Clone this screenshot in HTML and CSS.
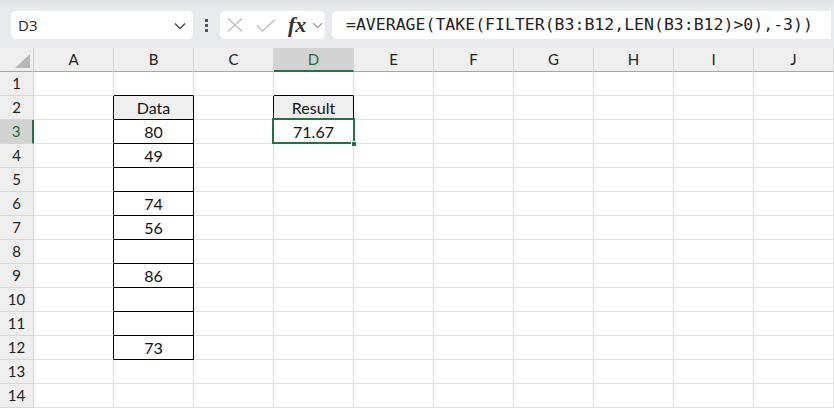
FILE: index.html
```html
<!DOCTYPE html>
<html>
<head>
<meta charset="utf-8">
<link rel="stylesheet" href="styles.css">
</head>
<body>
<div class="toolbar">
  <div class="namebox">
    <span class="nb-text">D3</span>
    <svg class="chev" width="12" height="8" viewBox="0 0 12 8"><path d="M1 1.5 L6 6.5 L11 1.5" fill="none" stroke="#444" stroke-width="1.3"/></svg>
  </div>
  <div class="dots"><span></span><span></span><span></span></div>
  <div class="fxbox">
    <svg class="ico" width="16" height="14" viewBox="0 0 16 14"><path d="M1 0.5 L15 13.5 M15 0.5 L1 13.5" stroke="#bdbdbd" stroke-width="1.3" fill="none"/></svg>
    <svg class="ico2" width="20" height="13" viewBox="0 0 20 13"><path d="M1 6.5 L6.5 12 L19 0.5" stroke="#bdbdbd" stroke-width="1.3" fill="none"/></svg>
    <span class="fx">fx</span>
    <svg class="chev2" width="11" height="7" viewBox="0 0 11 7"><path d="M1 1.2 L5.5 5.7 L10 1.2" fill="none" stroke="#9a9a9a" stroke-width="1.2"/></svg>
  </div>
  <div class="formula">=AVERAGE(TAKE(FILTER(B3:B12,LEN(B3:B12)&gt;0),-3))</div>
</div>
<div class="sheet">
  <div class="corner"><span class="tri"></span></div>
  <div class="ch">A</div><div class="ch">B</div><div class="ch">C</div><div class="ch sel">D</div><div class="ch">E</div><div class="ch">F</div><div class="ch">G</div><div class="ch">H</div><div class="ch">I</div><div class="ch">J</div>

  <div class="rh">1</div>
  <div class="c"></div><div class="c bb"></div><div class="c"></div><div class="c bb"></div><div class="c"></div><div class="c"></div><div class="c"></div><div class="c"></div><div class="c"></div><div class="c"></div>

  <div class="rh">2</div>
  <div class="c br"></div><div class="c bb br hd">Data</div><div class="c br"></div><div class="c bb br hd">Result</div><div class="c"></div><div class="c"></div><div class="c"></div><div class="c"></div><div class="c"></div><div class="c"></div>

  <div class="rh rsel">3</div>
  <div class="c br"></div><div class="c bb br">80</div><div class="c"></div><div class="c active">71.67<span class="selbox"></span><span class="handle"></span></div><div class="c"></div><div class="c"></div><div class="c"></div><div class="c"></div><div class="c"></div><div class="c"></div>

  <div class="rh">4</div>
  <div class="c br"></div><div class="c bb br">49</div><div class="c"></div><div class="c"></div><div class="c"></div><div class="c"></div><div class="c"></div><div class="c"></div><div class="c"></div><div class="c"></div>

  <div class="rh">5</div>
  <div class="c br"></div><div class="c bb br"></div><div class="c"></div><div class="c"></div><div class="c"></div><div class="c"></div><div class="c"></div><div class="c"></div><div class="c"></div><div class="c"></div>

  <div class="rh">6</div>
  <div class="c br"></div><div class="c bb br">74</div><div class="c"></div><div class="c"></div><div class="c"></div><div class="c"></div><div class="c"></div><div class="c"></div><div class="c"></div><div class="c"></div>

  <div class="rh">7</div>
  <div class="c br"></div><div class="c bb br">56</div><div class="c"></div><div class="c"></div><div class="c"></div><div class="c"></div><div class="c"></div><div class="c"></div><div class="c"></div><div class="c"></div>

  <div class="rh">8</div>
  <div class="c br"></div><div class="c bb br"></div><div class="c"></div><div class="c"></div><div class="c"></div><div class="c"></div><div class="c"></div><div class="c"></div><div class="c"></div><div class="c"></div>

  <div class="rh">9</div>
  <div class="c br"></div><div class="c bb br">86</div><div class="c"></div><div class="c"></div><div class="c"></div><div class="c"></div><div class="c"></div><div class="c"></div><div class="c"></div><div class="c"></div>

  <div class="rh">10</div>
  <div class="c br"></div><div class="c bb br"></div><div class="c"></div><div class="c"></div><div class="c"></div><div class="c"></div><div class="c"></div><div class="c"></div><div class="c"></div><div class="c"></div>

  <div class="rh">11</div>
  <div class="c br"></div><div class="c bb br"></div><div class="c"></div><div class="c"></div><div class="c"></div><div class="c"></div><div class="c"></div><div class="c"></div><div class="c"></div><div class="c"></div>

  <div class="rh">12</div>
  <div class="c br"></div><div class="c bb br">73</div><div class="c"></div><div class="c"></div><div class="c"></div><div class="c"></div><div class="c"></div><div class="c"></div><div class="c"></div><div class="c"></div>

  <div class="rh">13</div>
  <div class="c"></div><div class="c"></div><div class="c"></div><div class="c"></div><div class="c"></div><div class="c"></div><div class="c"></div><div class="c"></div><div class="c"></div><div class="c"></div>

  <div class="rh">14</div>
  <div class="c"></div><div class="c"></div><div class="c"></div><div class="c"></div><div class="c"></div><div class="c"></div><div class="c"></div><div class="c"></div><div class="c"></div><div class="c"></div>
</div>
</body>
</html>
```

FILE: styles.css
```css
* { box-sizing: border-box; }
html, body { margin: 0; padding: 0; }
body {
  width: 834px;
  height: 408px;
  overflow: hidden;
  background: #fff;
  font-family: Lato, "Liberation Sans", sans-serif;
}
.toolbar {
  height: 48px;
  background: linear-gradient(#dfe1e4 0px, #e8eaed 6px, #e8eaed 100%);
  display: flex;
  align-items: flex-start;
  padding: 11px 0 0 11px;
}
.namebox {
  width: 182px;
  height: 28px;
  background: #fff;
  border-radius: 5px;
  display: flex;
  align-items: center;
  justify-content: space-between;
  padding: 0 7px 0 7px;
}
.nb-text {
  font-family: "Open Sans", sans-serif;
  font-size: 15px;
  color: #262626;
}
.chev { margin-top: 1px; }
.dots {
  width: 27px;
  height: 28px;
  display: flex;
  flex-direction: column;
  align-items: center;
  justify-content: center;
  gap: 2px;
}
.dots span {
  width: 3px;
  height: 3px;
  background: #555;
}
.fxbox {
  width: 105px;
  height: 28px;
  background: #fff;
  border-radius: 5px;
  display: flex;
  align-items: center;
  padding-left: 7px;
}
.fxbox .ico { margin-right: 13px; }
.fxbox .ico2 { margin-right: 12px; margin-top: 1px; }
.fx {
  font-family: "Liberation Serif", serif;
  font-style: italic;
  font-weight: bold;
  font-size: 22px;
  line-height: 28px;
  color: #333;
  margin-right: 6px;
  letter-spacing: 0px;
}
.formula {
  margin-left: 7px;
  width: 499px;
  height: 28px;
  background: #fff;
  border-radius: 5px 0 0 5px;
  font-family: "DejaVu Sans Mono", monospace;
  font-size: 16.5px;
  line-height: 28px;
  color: #222;
  padding-left: 14px;
  white-space: nowrap;
}
.sheet {
  display: grid;
  grid-template-columns: 34px repeat(10, 80px);
  grid-auto-rows: 24px;
}
.corner {
  background: #efefef;
  border-right: 1px solid #cfcfcf;
  border-bottom: 1px solid #a6a6a6;
  position: relative;
}
.tri {
  position: absolute;
  right: 3px;
  bottom: 3px;
  width: 0;
  height: 0;
  border-left: 15px solid transparent;
  border-bottom: 14px solid #b7b7b7;
}
.ch {
  background: #efefef;
  border-right: 1px solid #d6d6d6;
  border-bottom: 1px solid #a6a6a6;
  text-align: center;
  font-size: 15px;
  line-height: 23px;
  color: #222;
}
.ch.sel {
  background: #d3d3d3;
  border-bottom: 2px solid #217346;
  color: #1e6b41;
}
.rh {
  background: #efefef;
  border-right: 1px solid #d6d6d6;
  border-bottom: 1px solid #d6d6d6;
  text-align: center;
  font-size: 15px;
  line-height: 23px;
  color: #222;
}
.rh.rsel {
  background: #d3d3d3;
  border-right: 2px solid #217346;
  color: #1e6b41;
}
.c {
  border-right: 1px solid #e1e1e1;
  border-bottom: 1px solid #e1e1e1;
  text-align: center;
  font-size: 16px;
  line-height: 23px;
  color: #111;
  position: relative;
}
.c.bb { border-bottom-color: #000; }
.c.br { border-right-color: #000; }
.c.hd { background: #efefef; }
.selbox {
  position: absolute;
  left: -2px;
  top: -2px;
  right: -2px;
  bottom: -1px;
  border: 2px solid #217346;
}
.handle {
  position: absolute;
  right: -4px;
  bottom: -4px;
  width: 6px;
  height: 6px;
  background: #217346;
  border: 1px solid #fff;
  z-index: 2;
}
```
